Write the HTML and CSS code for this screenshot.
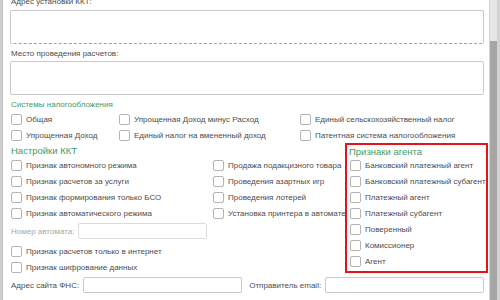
FILE: index.html
```html
<!DOCTYPE html>
<html lang="ru">
<head>
  <meta charset="UTF-8" />
  <title>Настройки ККТ</title>
  <link rel="stylesheet" href="styles.css">
</head>
<body>
  <div class="window">
    <div class="edge"></div>

    <div class="form">
      <div class="field-label first">Адрес установки ККТ:</div>
      <div class="memo required"></div>

      <div class="field-label">Место проведения расчетов:</div>
      <div class="memo"></div>

      <div class="group-title small">Системы налогообложения</div>
      <div class="tax-grid">
        <label class="check"><span class="box"></span>Общая</label>
        <label class="check"><span class="box"></span>Упрощенная Доход минус Расход</label>
        <label class="check"><span class="box"></span>Единый сельскохозяйственный налог</label>
        <label class="check"><span class="box"></span>Упрощенная Доход</label>
        <label class="check"><span class="box"></span>Единый налог на вмененный доход</label>
        <label class="check"><span class="box"></span>Патентная система налогообложения</label>
      </div>

      <div class="settings">
        <div class="col-left">
          <div class="group-title">Настройки ККТ</div>
          <label class="check"><span class="box"></span>Признак автономного режима</label>
          <label class="check"><span class="box"></span>Признак расчетов за услуги</label>
          <label class="check"><span class="box"></span>Признак формирования только БСО</label>
          <label class="check"><span class="box"></span>Признак автоматического режима</label>
          <div class="input-row number-row">
            <span class="disabled">Номер автомата:</span>
            <span class="input number"></span>
          </div>
          <label class="check gap"><span class="box"></span>Признак расчетов только в интернет</label>
          <label class="check"><span class="box"></span>Признак шифрование данных</label>
        </div>

        <div class="col-mid">
          <label class="check"><span class="box"></span>Продажа подакцизного товара</label>
          <label class="check"><span class="box"></span>Проведения азартных игр</label>
          <label class="check"><span class="box"></span>Проведения лотерей</label>
          <label class="check"><span class="box"></span>Установка принтера в автомате</label>
        </div>

        <div class="agent">
          <div class="group-title">Признаки агента</div>
          <label class="check"><span class="box"></span>Банковский платежный агент</label>
          <label class="check"><span class="box"></span>Банковский платежный субагент</label>
          <label class="check"><span class="box"></span>Платежный агент</label>
          <label class="check"><span class="box"></span>Платежный субагент</label>
          <label class="check"><span class="box"></span>Поверенный</label>
          <label class="check"><span class="box"></span>Комиссионер</label>
          <label class="check"><span class="box"></span>Агент</label>
        </div>
      </div>

      <div class="input-row fns-row">
        <span>Адрес сайта ФНС:</span>
        <span class="input site"></span>
        <span class="email-label">Отправитель email:</span>
        <span class="input email"></span>
      </div>
    </div>

    <div class="scrollbar"><div class="thumb"></div></div>
  </div>
</body>
</html>
```

FILE: styles.css
```css
:root {
  --text: #4d4d4d;
  --muted: #a8a8a8;
  --green: #3f9b62;
  --border: #c9c9c9;
  --box: #b4b4b4;
  --red: #e3141b;
}

* { box-sizing: border-box; }

html, body {
  margin: 0;
  width: 500px;
  height: 300px;
  overflow: hidden;
  background: #ffffff;
  font-family: 'Liberation Sans', Arial, sans-serif;
  font-size: 8px;
  color: var(--text);
}

.window {
  display: flex;
  height: 300px;
}

.edge {
  width: 3px;
  background: #cfcfcf;
  border-right: 1px solid #bdbdbd;
}

.form {
  flex: 1;
  padding-left: 7px;
  margin-top: -5px;
}

.field-label {
  height: 13px;
  line-height: 13px;
  padding-left: 1px;
  margin-top: 3px;
}

.field-label.first { margin-top: 0; }

.memo {
  height: 34px;
  margin: 2px 5px 0 0;
  border: 1px solid var(--border);
  border-radius: 2px;
}

.memo + .field-label + .memo { margin-top: 1px; }

.memo.required {
  border-bottom: 1px dashed #ef7f86;
}

.group-title {
  color: var(--green);
  font-size: 9.5px;
  height: 14px;
  line-height: 15px;
  padding-left: 1px;
}

.group-title.small {
  font-size: 8px;
  height: 12px;
  line-height: 12px;
  margin-top: 4px;
}

.tax-grid {
  display: grid;
  grid-template-columns: 108px 181px 1fr;
}

.check {
  display: flex;
  align-items: center;
  gap: 4px;
  height: 16px;
  padding-left: 1px;
  white-space: nowrap;
}

.box {
  width: 11px;
  height: 11px;
  border: 1px solid var(--box);
  border-radius: 2px;
  background: #fff;
  flex: none;
}

.settings {
  display: flex;
  align-items: flex-start;
}

.col-left {
  width: 203px;
}

.col-mid {
  width: 132px;
  padding-top: 14px;
}

.col-mid .check { padding-left: 0; }

.agent {
  width: 143px;
  height: 130px;
  border: 2px solid var(--red);
  padding: 0 0 0 2px;
}

.agent .group-title {
  height: 12px;
  line-height: 13px;
  padding-left: 0;
}

.agent .check { padding-left: 1px; }

.input-row {
  display: flex;
  align-items: center;
  height: 16px;
  padding-left: 1px;
  white-space: nowrap;
}

.number-row { margin-top: 2px; }

.check.gap { margin-top: 4px; }

.disabled { color: var(--muted); }

.input {
  height: 16px;
  border: 1px solid var(--border);
  border-radius: 2px;
}

.input.number {
  width: 129px;
  margin-left: auto;
  margin-right: 6px;
  border-color: #dcdcdc;
}

.fns-row {
  margin-top: 2px;
  margin-right: 5px;
}

.input.site {
  width: 159px;
  margin-left: 4px;
}

.email-label { margin-left: 7px; }

.input.email {
  flex: 1;
  margin-left: 4px;
}

.scrollbar {
  width: 11px;
  background: #e6e6e6;
  border-left: 1px solid #d6d6d6;
  border-right: 3px solid #d2d2d2;
  position: relative;
}

.thumb {
  position: absolute;
  left: 0;
  right: 0;
  top: 41px;
  bottom: 0;
  background: #a6a6a6;
}
```
